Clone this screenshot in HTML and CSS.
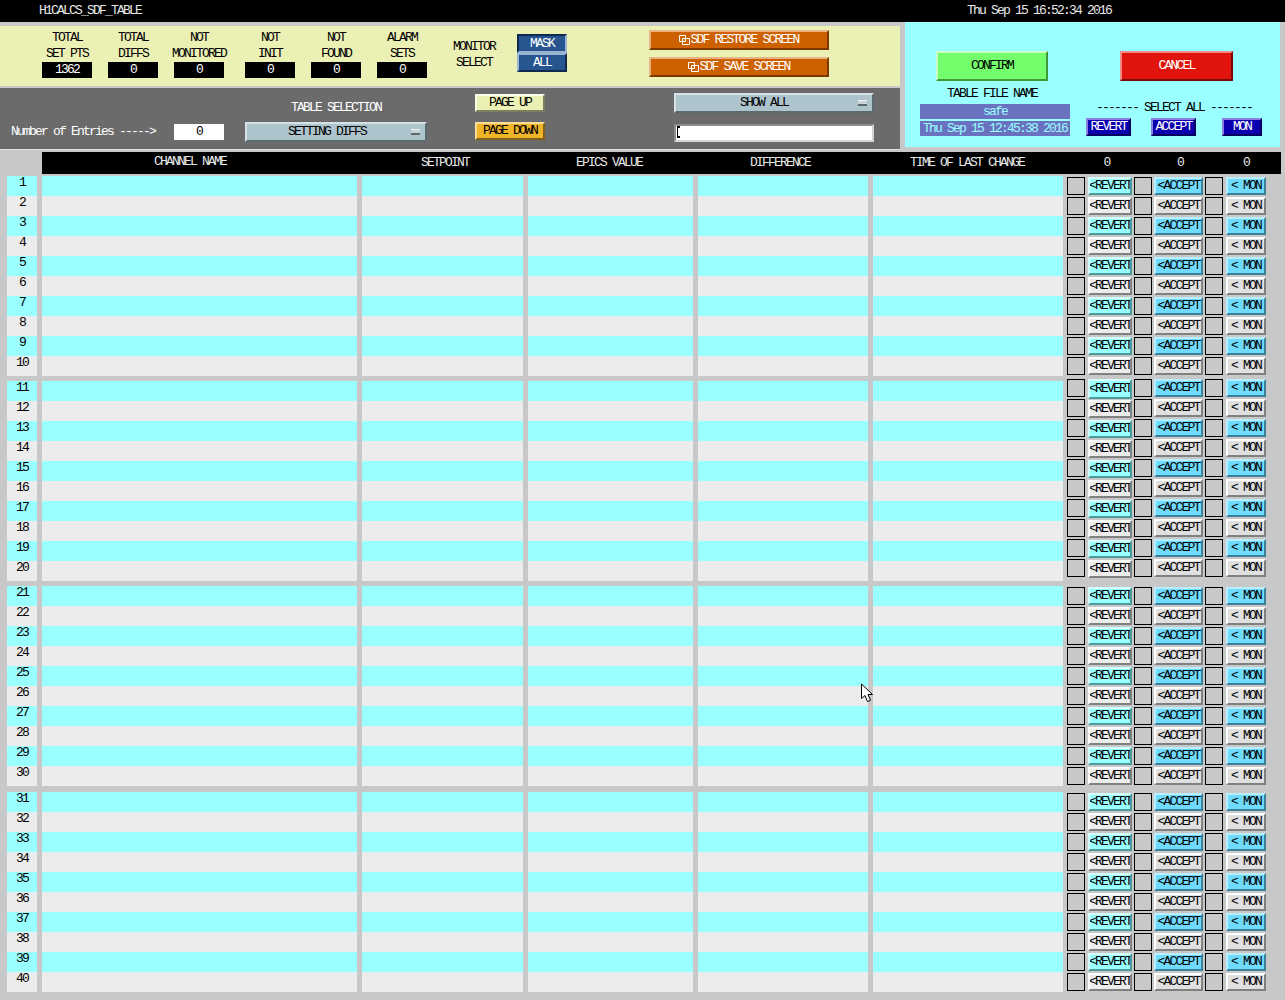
FILE: index.html
```html
<!DOCTYPE html>
<html lang="en">
<head>
  <meta charset="UTF-8" />
  <title>H1CALCS_SDF_TABLE</title>
  <link rel="stylesheet" href="styles.css">
</head>
<body>
  <div class="title-bar">
    <div class="title-name">H1CALCS_SDF_TABLE</div>
    <div>Thu Sep 15 16:52:34 2016</div>
  </div>

  <div class="top">
    <div class="top-left">
      <div class="stats">
        <div class="stat"><div class="stat-label">TOTAL<br>SET PTS</div><div class="readout">1362</div></div>
        <div class="stat"><div class="stat-label">TOTAL<br>DIFFS</div><div class="readout">0</div></div>
        <div class="stat"><div class="stat-label">NOT<br>MONITORED</div><div class="readout">0</div></div>
        <div class="stat stat-wide"><div class="stat-label">NOT<br>INIT</div><div class="readout">0</div></div>
        <div class="stat"><div class="stat-label">NOT<br>FOUND</div><div class="readout">0</div></div>
        <div class="stat"><div class="stat-label">ALARM<br>SETS</div><div class="readout">0</div></div>
        <div class="monitor-label">MONITOR<br>SELECT</div>
        <div class="monitor-buttons">
          <div class="btn btn-blue pressed">MASK</div>
          <div class="btn btn-blue">ALL</div>
        </div>
        <div class="sdf-buttons">
          <div class="btn btn-orange">
            <svg class="sdf-icon" width="11" height="10" viewBox="0 0 11 10"><path d="M.5.5h6v6h-6zM3.5 3.5h7v6h-7z" fill="none" stroke="#fff"/></svg>SDF RESTORE SCREEN
          </div>
          <div class="btn btn-orange">
            <svg class="sdf-icon" width="11" height="10" viewBox="0 0 11 10"><path d="M.5.5h6v6h-6zM3.5 3.5h7v6h-7z" fill="none" stroke="#fff"/></svg>SDF SAVE SCREEN
          </div>
        </div>
      </div>

      <div class="selection">
        <div class="entries">
          <div class="entries-label">Number of Entries -----&gt;</div>
          <div class="entries-value">0</div>
        </div>
        <div class="table-select">
          <div class="table-select-label">TABLE SELECTION</div>
          <div class="btn menu"><span class="menu-text">SETTING DIFFS</span><span class="menu-mark"></span></div>
        </div>
        <div class="pager">
          <div class="btn btn-page-up">PAGE UP</div>
          <div class="btn btn-page-down">PAGE DOWN</div>
        </div>
        <div class="filter">
          <div class="btn menu menu-show"><span class="menu-text">SHOW ALL</span><span class="menu-mark"></span></div>
          <div class="filter-input"><span class="caret"></span></div>
        </div>
      </div>
    </div>

    <div class="actions">
      <div class="actions-left">
        <div class="btn btn-confirm">CONFIRM</div>
        <div class="file-label">TABLE FILE NAME</div>
        <div class="file-box">safe</div>
        <div class="file-box">Thu Sep 15 12:45:38 2016</div>
      </div>
      <div class="actions-right">
        <div class="btn btn-cancel">CANCEL</div>
        <div class="select-all-label">------- SELECT ALL -------</div>
        <div class="select-all">
          <div class="btn btn-all btn-all-revert">REVERT</div>
          <div class="btn btn-all btn-all-accept">ACCEPT</div>
          <div class="btn btn-all btn-all-mon">MON</div>
        </div>
      </div>
    </div>
  </div>

  <div class="table-head">
    <div class="head-name">CHANNEL NAME</div>
    <div class="head-setpoint">SETPOINT</div>
    <div class="head-epics">EPICS VALUE</div>
    <div class="head-diff">DIFFERENCE</div>
    <div class="head-time">TIME OF LAST CHANGE</div>
    <div class="head-count count-revert">0</div>
    <div class="head-count count-accept">0</div>
    <div class="head-count count-mon">0</div>
  </div>

  <div id="rows"></div>

  <svg class="cursor" width="14" height="20" viewBox="0 0 14 20"><path d="M1.5 1v14.5l3.500-3 2.500 6 3-1.200-2.500-5.800h4.500z" fill="#fff" stroke="#000"/></svg>

  <script src="table.js"></script>
</body>
</html>
```

FILE: styles.css
```css
body {
  margin: 0;
  position: relative;
  height: 1000px;
  overflow: hidden;
  background: #c8c8c8;
  color: #000;
  font-family: "Liberation Mono", monospace;
  font-size: 13px;
  letter-spacing: -1.8px;
  line-height: 16px;
}
.title-bar {
  display: flex;
  align-items: center;
  height: 22px;
  padding-left: 39px;
  background: #000;
  color: #e8e8e8;
}
.title-name {
  width: 928px;
}
.top {
  display: flex;
}
.top-left {
  width: 900px;
  padding-top: 4px;
}

.stats {
  display: flex;
  height: 56px;
  padding: 4px 0 0 42px;
  background: #ebf1b5;
}
.stat {
  width: 50px;
  margin-right: 16px;
  text-align: center;
}
.stat-wide {
  margin-left: 5px;
}
.stat-label {
  height: 32px;
  margin: 0 -15px;
  white-space: nowrap;
}
.readout {
  height: 16px;
  background: #000;
  color: #fff;
}
.monitor-label {
  width: 60px;
  margin: 9px 0 0 1px;
  text-align: center;
}
.monitor-buttons {
  width: 50px;
  margin: 4px 0 0 13px;
}
.sdf-buttons {
  display: flex;
  flex-direction: column;
  gap: 7px;
  width: 180px;
  margin-left: 82px;
}

.btn {
  display: flex;
  align-items: center;
  justify-content: center;
  box-sizing: border-box;
  border: 2px solid;
  line-height: 14px;
  white-space: nowrap;
}
.btn-blue {
  height: 19px;
  background: #265590;
  border-color: #9ab4d4 #0f2a4d #0f2a4d #9ab4d4;
  color: #fff;
}
.btn-blue.pressed {
  border-color: #0f2a4d #9ab4d4 #9ab4d4 #0f2a4d;
}
.btn-orange {
  height: 20px;
  background: #cd6100;
  border-color: #eab283 #793900 #793900 #eab283;
  color: #fff;
}
.sdf-icon {
  flex: none;
}

.selection {
  display: flex;
  align-items: flex-start;
  height: 61px;
  margin-top: 2px;
  background: #6b6b6b;
  box-shadow: 0 1px 0 #e0e0e0;
  color: #fff;
}
.entries {
  display: flex;
  width: 234px;
  margin: 36px 0 0 11px;
}
.entries-label {
  width: 163px;
  white-space: nowrap;
}
.entries-value {
  width: 50px;
  height: 16px;
  background: #fff;
  color: #000;
  text-align: center;
}
.table-select {
  width: 182px;
  margin-top: 12px;
  text-align: center;
}
.table-select-label {
  height: 22px;
}
.menu {
  position: relative;
  height: 20px;
  background: #aec4cc;
  border-color: #d6e2e6 #5c6a70 #5c6a70 #d6e2e6;
  color: #000;
}
.menu-text {
  margin-right: 18px;
}
.menu-mark {
  position: absolute;
  top: 5px;
  right: 5px;
  box-sizing: border-box;
  width: 9px;
  height: 6px;
  background: #c8d4d8;
  border-top: 1px solid #f0f4f5;
  border-bottom: 2px solid #5c6a70;
}
.pager {
  display: flex;
  flex-direction: column;
  gap: 10px;
  width: 70px;
  margin: 6px 0 0 48px;
}
.btn-page-up {
  height: 18px;
  background: #ebf1b5;
  border-color: #fbfde8 #7d8060 #7d8060 #fbfde8;
  color: #000;
}
.btn-page-down {
  height: 18px;
  background: #f0b429;
  border-color: #f8dc98 #80601a #80601a #f8dc98;
  color: #000;
}
.filter {
  width: 200px;
  margin: 5px 0 0 129px;
}
.menu-show .menu-text {
  margin-right: 20px;
}
.filter-input {
  box-sizing: border-box;
  height: 18px;
  margin-top: 11px;
  padding-left: 1px;
  background: #fff;
  border: 2px solid;
  border-color: #8c8c8c #d4d4d4 #d4d4d4 #8c8c8c;
}
.caret {
  display: block;
  width: 2px;
  height: 12px;
  border-left: 1px solid #000;
  background: linear-gradient(#000 2px, transparent 2px, transparent 10px, #000 10px);
}

.actions {
  display: flex;
  width: 375px;
  height: 125px;
  margin-left: 5px;
  padding-top: 29px;
  box-sizing: border-box;
  background: #99ffff;
}
.actions-left {
  width: 150px;
  margin-left: 15px;
}
.btn-confirm {
  width: 112px;
  height: 30px;
  margin-left: 16px;
  background: #73ff6b;
  border-color: #c8ffc4 #3e9a3a #3e9a3a #c8ffc4;
}
.file-label {
  margin-top: 5px;
  padding-right: 6px;
  text-align: center;
}
.file-box {
  height: 15px;
  margin-top: 2px;
  background: #6a72c0;
  color: #99ffff;
  line-height: 15px;
  text-align: center;
}
.actions-right {
  width: 176px;
  margin-left: 16px;
}
.btn-cancel {
  width: 113px;
  height: 30px;
  margin-left: 34px;
  background: #e0140a;
  border-color: #f08a84 #7c0a05 #7c0a05 #f08a84;
  color: #fff;
}
.select-all-label {
  margin-top: 19px;
  text-align: center;
  white-space: nowrap;
}
.select-all {
  display: flex;
  margin-top: 2px;
}
.btn-all {
  height: 18px;
  background: #0a00b0;
  border-color: #8880e0 #060060 #060060 #8880e0;
  color: #fff;
}
.btn-all-revert {
  width: 45px;
}
.btn-all-accept {
  width: 45px;
  margin-left: 20px;
}
.btn-all-mon {
  width: 40px;
  margin-left: 26px;
}

.table-head {
  display: grid;
  grid-template-columns: 315px 161px 165px 170px 190px 68px 68px 62px;
  column-gap: 5px;
  align-items: center;
  height: 22px;
  margin: 3px 4px 2px 42px;
  background: #000;
  color: #e8e8e8;
  text-align: center;
}
.head-name {
  padding-right: 19px;
  margin-top: -2px;
}
.head-setpoint {
  padding-left: 5px;
}
.head-epics {
  padding-right: 3px;
}
.head-diff {
  padding-right: 6px;
}
.head-time {
  padding-right: 2px;
  white-space: nowrap;
}
.head-count {
  margin-left: -5px;
}
.count-revert {
  padding-left: 14px;
}
.count-accept {
  padding-left: 15px;
}
.count-mon {
  padding-left: 7px;
}

.group {
  margin: 0 0 5px 7px;
}
.group:nth-child(3) {
  margin-bottom: 6px;
}
.row {
  display: grid;
  grid-template-columns: 30px 315px 161px 165px 170px 190px 195px;
  column-gap: 5px;
  height: 20px;
}
.cell {
  background: #ececec;
}
.row:nth-child(odd) .cell {
  background: #99ffff;
}
.row-num {
  line-height: 14px;
  text-align: center;
}
.row-controls {
  display: flex;
  align-items: flex-start;
  gap: 2px;
  height: 18px;
  margin: 1px 0 0 -1px;
}
.group-shifted .row-controls {
  margin-top: -2px;
}
.check {
  flex: none;
  box-sizing: border-box;
  width: 18px;
  height: 18px;
  border: 1px solid #000;
  background: #c8c8c8;
}
.row-btn {
  flex: none;
  height: 18px;
  background: #e0e0e0;
  border-color: #fff #808080 #808080 #fff;
  overflow: hidden;
}
.row-revert {
  width: 44px;
  margin-left: 1px;
  background: #ececec;
}
.row-accept {
  width: 49px;
}
.row-mon {
  width: 40px;
  margin-left: 1px;
}
.row:nth-child(odd) .row-revert {
  background: #99ffff;
  border-color: #d4ffff #4c9a9a #4c9a9a #d4ffff;
}
.row:nth-child(odd) .row-accept,
.row:nth-child(odd) .row-mon {
  background: #6fdcff;
  border-color: #b8eeff #3a8098 #3a8098 #b8eeff;
}
/* second block: the revert column sits lower than its neighbours */
.group-shifted .row:first-child .row-revert {
  height: 20px;
}
.group-shifted .row:not(:first-child) .row-revert {
  align-items: flex-end;
  margin-top: 1px;
}

.cursor {
  position: absolute;
  top: 683px;
  left: 860px;
}
```

FILE: table.js
```js
var rows = document.getElementById('rows');

function addRow(group, n) {
  var row = document.createElement('div');
  row.className = 'row';
  row.innerHTML =
    '<div class="cell row-num">' + n + '</div>' +
    '<div class="cell"></div><div class="cell"></div><div class="cell"></div>' +
    '<div class="cell"></div><div class="cell"></div>' +
    '<div class="row-controls">' +
    '<div class="check"></div><div class="btn row-btn row-revert">&lt;REVERT</div>' +
    '<div class="check"></div><div class="btn row-btn row-accept">&lt;ACCEPT</div>' +
    '<div class="check"></div><div class="btn row-btn row-mon">&lt; MON</div>' +
    '</div>';
  group.appendChild(row);
}

for (var g = 0; g < 4; g++) {
  var group = document.createElement('div');
  group.className = g == 1 ? 'group group-shifted' : 'group';
  for (var i = 1; i <= 10; i++) {
    addRow(group, g * 10 + i);
  }
  rows.appendChild(group);
}
```
